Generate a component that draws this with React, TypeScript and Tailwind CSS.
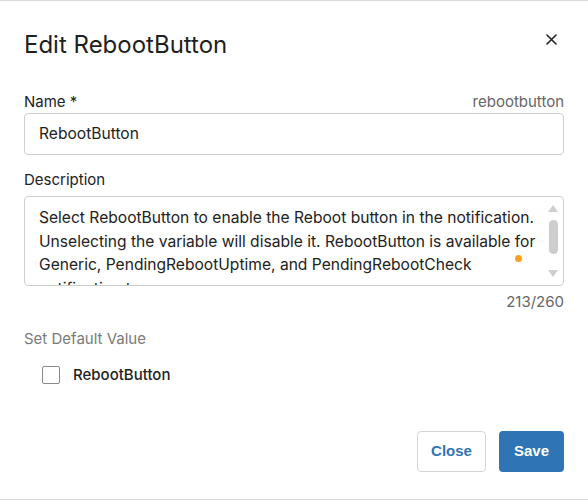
import React from 'react';

const description =
  'Select RebootButton to enable the Reboot button in the notification. Unselecting the variable will disable it. RebootButton is available for Generic, PendingRebootUptime, and PendingRebootCheck notification types.';

const lines = [
  'Select RebootButton to enable the Reboot button in the notification.',
  'Unselecting the variable will disable it. RebootButton is available for',
  'Generic, PendingRebootUptime, and PendingRebootCheck',
  'notification types.',
];

export default function App() {
  return (
    <div className="w-[588px] h-[500px] bg-white border-y border-[#d9d9d9] font-['Inter',sans-serif] text-[#222]">
      <div className="flex items-start justify-between pl-[24px] pr-[31px] pt-[27px]">
        <h2 className="text-[24px] leading-[34px] font-normal text-[#1f1f1f]">Edit RebootButton</h2>
        <button className="mt-[6px] text-[#222]" aria-label="Close">
          <svg width="11" height="11" viewBox="0 0 11 11" fill="none" stroke="currentColor" strokeWidth="1.6" strokeLinecap="round">
            <path d="M1 1 L10 10 M10 1 L1 10" />
          </svg>
        </button>
      </div>

      <div className="px-[24px] text-[15px]">
        <div className="mt-[30px] flex items-center justify-between leading-[20px]">
          <span>Name *</span>
          <span className="text-[#666]">rebootbutton</span>
        </div>
        <div className="mt-[1px] h-[42px] rounded-[4px] border border-[#cfcfcf] flex items-center px-[14px] text-[15.6px]">
          RebootButton
        </div>

        <div className="mt-[15px] leading-[20px]">Description</div>
        <div className="mt-[6px] h-[90px] rounded-[4px] border border-[#cfcfcf] flex overflow-hidden" title={description}>
          <div className="flex-1 pl-[14px] pt-[9px] text-[15.6px] leading-[23.5px] whitespace-nowrap overflow-hidden relative">
            {lines.map((l) => (
              <div key={l}>{l}</div>
            ))}
            <span className="absolute left-[490px] top-[58px] w-[7px] h-[7px] rounded-full bg-[#f5a01e]" />
          </div>
          <div className="w-[16px] mr-[2px] flex flex-col items-center pt-[8px] pb-[8px]">
            <svg width="10" height="7" viewBox="0 0 10 7">
              <path d="M5 0 L10 7 L0 7 Z" fill="#cfcfcf" />
            </svg>
            <div className="mt-[8px] w-[9px] h-[34px] rounded-full bg-[#cdcdcd]" />
            <div className="flex-1" />
            <svg width="10" height="7" viewBox="0 0 10 7">
              <path d="M0 0 L10 0 L5 7 Z" fill="#cfcfcf" />
            </svg>
          </div>
        </div>
        <div className="mt-[6px] text-right leading-[20px] text-[#666]">213/260</div>

        <div className="mt-[17px] leading-[20px] text-[#7a7a7a]">Set Default Value</div>
        <label className="mt-[15px] ml-[18px] flex items-center gap-[13px]">
          <span className="w-[18px] h-[18px] rounded-[2px] border border-[#8a8a8a] bg-white" />
          <span className="font-medium text-[#222]">RebootButton</span>
        </label>

        <div className="mt-[44px] flex justify-end gap-[13px] font-['Liberation_Sans',Arial,sans-serif] font-bold text-[15px]">
          <button className="h-[41px] px-[13px] rounded-[4px] border border-[#d4d4d4] text-[#2f74b5] bg-white">
            Close
          </button>
          <button className="h-[41px] px-[15px] rounded-[4px] bg-[#2f74b5] text-white">Save</button>
        </div>
      </div>
    </div>
  );
}
